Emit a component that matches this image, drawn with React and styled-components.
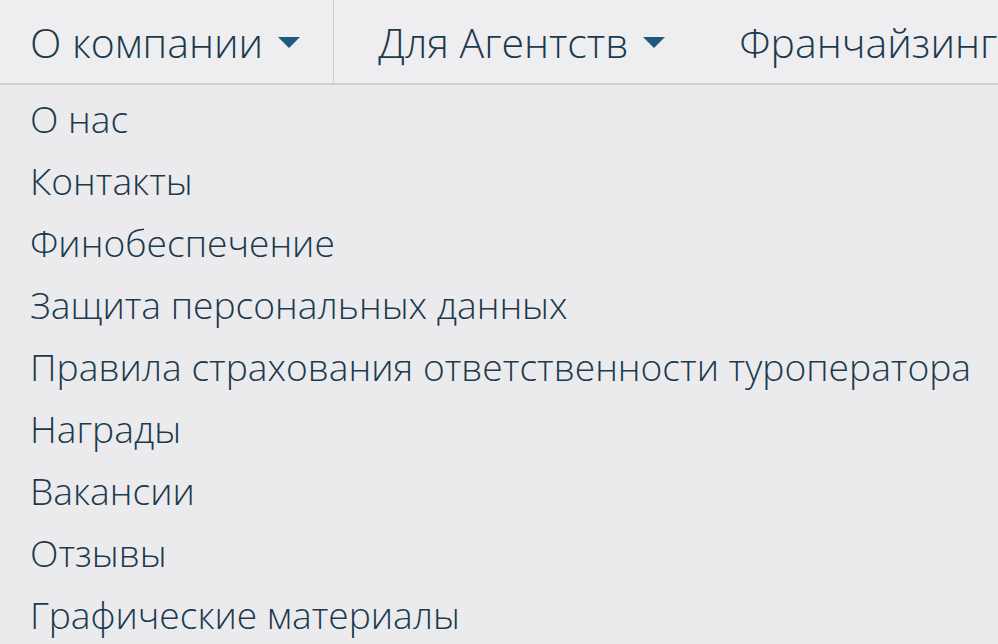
import styled, { createGlobalStyle } from "styled-components";

const GlobalStyle = createGlobalStyle`
  html, body {
    margin: 0;
    padding: 0;
    background: #ebebed;
    overflow: hidden;
  }
  body {
    font-family: "Open Sans", "Noto Sans", sans-serif;
    font-weight: 300;
    color: #1b3a4d;
  }
`;

const Page = styled.div`
  width: 998px;
  height: 644px;
  background: #ebebed;
  overflow: hidden;
`;

const TopBar = styled.nav`
  display: flex;
  align-items: stretch;
  height: 83px;
  background: #eeeef0;
  border-bottom: 2px solid #cfcfd1;
  white-space: nowrap;
`;

const TopItem = styled.div`
  display: flex;
  align-items: center;
  gap: 15px;
  padding: ${(p) => p.$pad};
  font-size: 41px;
  border-right: ${(p) => (p.$divider ? "1px solid #cdcdcf" : "none")};
`;

const Caret = styled.span`
  width: 0;
  height: 0;
  margin-top: 2px;
  border-left: 11px solid transparent;
  border-right: 11px solid transparent;
  border-top: 11px solid #1d5a7e;
`;

const Menu = styled.ul`
  list-style: none;
  margin: 0;
  padding: 3px 0 0 30px;
`;

const MenuItem = styled.li`
  font-size: 37.2px;
  line-height: 62px;
  white-space: nowrap;
`;

const items = [
  "О нас",
  "Контакты",
  "Финобеспечение",
  "Защита персональных данных",
  "Правила страхования ответственности туроператора",
  "Награды",
  "Вакансии",
  "Отзывы",
  "Графические материалы",
];

export default function App() {
  return (
    <Page>
      <GlobalStyle />
      <TopBar>
        <TopItem $pad="0 33px 0 30px" $divider>
          О компании <Caret />
        </TopItem>
        <TopItem $pad="0 44px 0 44px">
          Для Агентств <Caret />
        </TopItem>
        <TopItem $pad="0 0 0 30px">Франчайзинг</TopItem>
      </TopBar>
      <Menu>
        {items.map((t) => (
          <MenuItem key={t}>{t}</MenuItem>
        ))}
      </Menu>
    </Page>
  );
}
